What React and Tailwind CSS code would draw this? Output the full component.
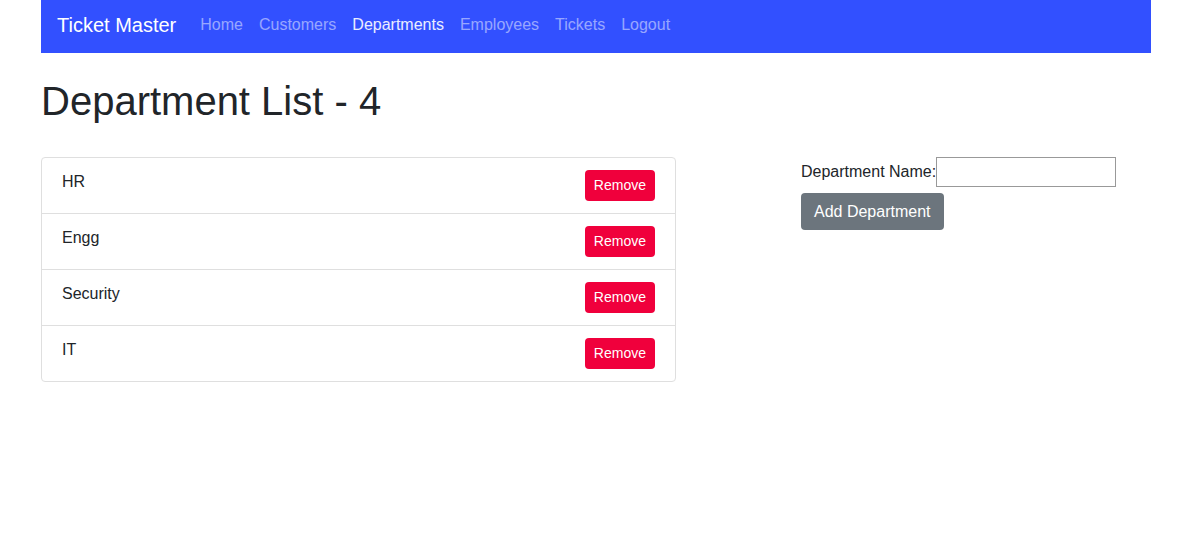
import React from 'react';

const departments = ['HR', 'Engg', 'Security', 'IT'];

const navLinks = [
  { label: 'Home', active: false },
  { label: 'Customers', active: false },
  { label: 'Departments', active: true },
  { label: 'Employees', active: false },
  { label: 'Tickets', active: false },
  { label: 'Logout', active: false },
];

export default function App() {
  return (
    <div className="min-h-[544px] bg-white text-[#212529]" style={{ fontFamily: '"Liberation Sans", Arial, sans-serif' }}>
      <div className="ml-[41px] w-[1110px]">
        {/* Navbar */}
        <nav className="flex h-[53px] items-center bg-[#3250ff] px-4 pb-[4px]">
          <span className="mr-4 text-[20px] text-white">Ticket Master</span>
          <div className="flex">
            {navLinks.map((link) => (
              <span
                key={link.label}
                className={`px-2 text-[16px] ${link.active ? 'text-white/90' : 'text-white/50'}`}
              >
                {link.label}
              </span>
            ))}
          </div>
        </nav>

        <h1 className="mt-[24px] text-[40px] leading-[48px]">Department List - 4</h1>

        <div className="mt-[32px] flex">
          {/* List */}
          <div className="w-[635px] rounded border border-[#dfdfdf]">
            {departments.map((dept, i) => (
              <div
                key={dept}
                className={`flex items-start justify-between px-5 py-3 ${i > 0 ? 'border-t border-[#dfdfdf]' : ''}`}
              >
                <span className="text-[16px] leading-[24px]">{dept}</span>
                <button className="h-[31px] rounded bg-[#f0003c] px-[9px] text-[14px] text-white">Remove</button>
              </div>
            ))}
          </div>

          {/* Form */}
          <div className="ml-[125px]">
            <div className="flex items-center">
              <span className="text-[16px] leading-[24px]">Department Name:</span>
              <input type="text" className="h-[30px] w-[180px] border border-[#999] px-1 outline-none" />
            </div>
            <button className="mt-[6px] h-[37px] rounded bg-[#6c757d] px-[13px] text-[16px] text-white">Add Department</button>
          </div>
        </div>
      </div>
    </div>
  );
}
